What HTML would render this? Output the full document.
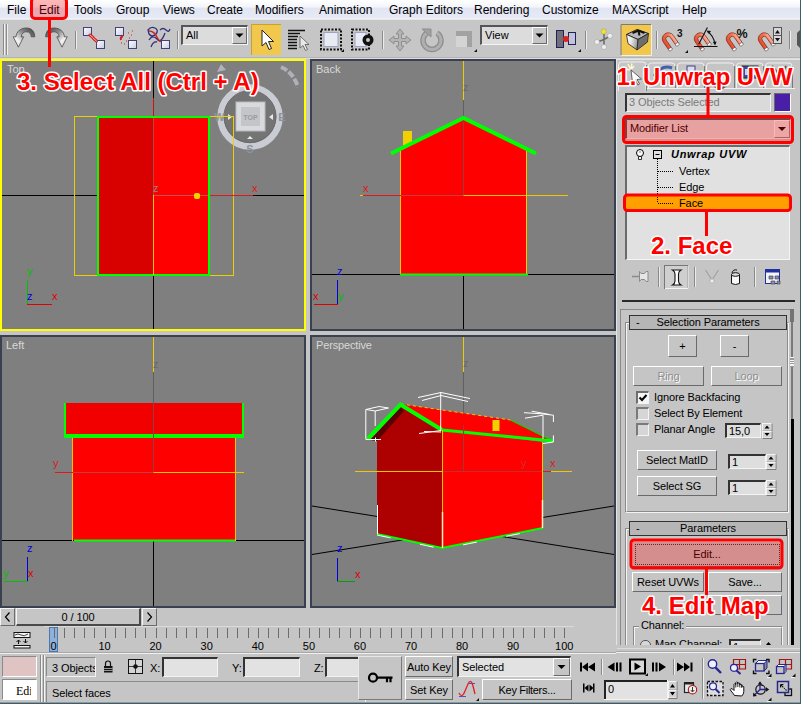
<!DOCTYPE html>
<html>
<head>
<meta charset="utf-8">
<title>3ds Max - Unwrap UVW</title>
<style>
html,body{margin:0;padding:0;}
body{width:801px;height:704px;overflow:hidden;background:#c5c5c5;font-family:"Liberation Sans",sans-serif;font-size:11px;color:#000;position:relative;}
.abs{position:absolute;}
#menubar{left:0;top:0;width:801px;height:19px;background:linear-gradient(#ffffff 0%,#f3f4fa 38%,#e1e5f3 42%,#e6e9f5 92%,#f6f7fb 100%);}
#menubar span{position:absolute;top:3px;font-size:12px;color:#000;white-space:nowrap;}
#toolbar{left:0;top:19px;width:801px;height:39px;background:#c6c6c6;border-top:1px solid #e8e8e8;box-sizing:border-box;}
.vp{position:absolute;box-sizing:border-box;border:2px solid #394150;background:#7f7f7f;overflow:hidden;}
.vp.active{border-color:#ffff00;}
.vp svg{position:absolute;left:-2px;top:-2px;}
.vplabel{font-family:"Liberation Sans",sans-serif;font-size:11px;fill:#d8d8d8;}
.ax{font-family:"Liberation Sans",sans-serif;font-size:11px;}
.btn{position:absolute;box-sizing:border-box;background:#c5c5c5;border:1px solid;border-color:#fff #6a6a6a #6a6a6a #fff;text-align:center;font-size:11px;white-space:nowrap;overflow:hidden;}
.sunk{position:absolute;box-sizing:border-box;background:#dcdcdc;border:1px solid;border-color:#555 #fff #fff #555;font-size:11px;white-space:nowrap;overflow:hidden;}
.txt{position:absolute;white-space:nowrap;font-size:11px;}
.anno{font-family:"Liberation Sans",sans-serif;font-weight:bold;fill:#ff0000;stroke:#fff;stroke-width:3px;paint-order:stroke fill;stroke-linejoin:round;}
</style>
</head>
<body>

<!-- MENU BAR -->
<div id="menubar" class="abs">
<span style="left:7px">File</span>
<span style="left:39px">Edit</span>
<span style="left:74px">Tools</span>
<span style="left:116px">Group</span>
<span style="left:163px">Views</span>
<span style="left:207px">Create</span>
<span style="left:255px">Modifiers</span>
<span style="left:319px">Animation</span>
<span style="left:389px">Graph Editors</span>
<span style="left:474px">Rendering</span>
<span style="left:542px">Customize</span>
<span style="left:612px">MAXScript</span>
<span style="left:682px">Help</span>
</div>

<!-- TOOLBAR -->
<div id="toolbar" class="abs">
<svg class="abs" style="left:0;top:-1px" width="801" height="40" viewBox="0 19 801 40">
<defs>
<linearGradient id="gArrow" x1="1" y1="0" x2="0.100" y2="0.900"><stop offset="0" stop-color="#3a3a3a"/><stop offset="0.450" stop-color="#8c8c8c"/><stop offset="0.800" stop-color="#f4f4f4"/><stop offset="1" stop-color="#d0d0d0"/></linearGradient>
<linearGradient id="gSq" x1="0" y1="0" x2="1" y2="1"><stop offset="0" stop-color="#ffffff"/><stop offset="1" stop-color="#c8cce0"/></linearGradient>
<linearGradient id="gMag" x1="0" y1="0" x2="1" y2="0"><stop offset="0" stop-color="#e8482a"/><stop offset="0.6" stop-color="#f4704e"/><stop offset="1" stop-color="#ffb8a0"/></linearGradient>
<linearGradient id="gCube" x1="0" y1="0" x2="1" y2="0.300"><stop offset="0" stop-color="#ffffff"/><stop offset="0.500" stop-color="#e8e8e8"/><stop offset="1" stop-color="#a0a0a0"/></linearGradient>
</defs>
<rect x="0" y="57" width="801" height="1" fill="#b4b4b4"/><rect x="0" y="58" width="801" height="1" fill="#dcdcdc"/>
<!-- grip -->
<path d="M3.500 24V55M6.500 24V55" stroke="#8a8a8a" stroke-width="1"/>
<path d="M4.500 24V55M7.500 24V55" stroke="#f0f0f0" stroke-width="1"/>
<!-- undo -->
<path id="undoA" d="M13.200 36.800L18.400 47.200L23.600 36.800H21.200C21.500 33.500 23.500 31.800 26.500 31.800C29.500 31.800 31 33.500 31.200 36.800H34.800C34.500 31 31.500 28 26.400 28C20.500 28 16.500 31.500 16 36.800Z" fill="url(#gArrow)" stroke="#4a4a4a" stroke-width="0.800" stroke-linejoin="round"/>
<!-- redo -->
<use href="#undoA" transform="translate(80.400 0) scale(-1 1)"/>
<path d="M75.500 31V49M177.500 31V49M382.500 31V49M585.500 31V49M656.500 31V49M789.500 31V49" stroke="#8a8a8a" stroke-width="1"/>
<path d="M76.500 31V49M178.500 31V49M383.500 31V49M586.500 31V49M657.500 31V49M790.500 31V49" stroke="#ececec" stroke-width="1"/>
<!-- link -->
<rect x="83.500" y="27.500" width="8" height="8" fill="url(#gSq)" stroke="#40407a"/>
<rect x="96.500" y="40.500" width="8" height="8" fill="url(#gSq)" stroke="#40407a"/>
<path d="M90 35l3 2.500M93.500 38.500l3 2.500" stroke="#d02020" stroke-width="3" stroke-linecap="round" fill="none"/>
<path d="M90 35l3 2.500M93.500 38.500l3 2.500" stroke="#f8c0c0" stroke-width="1" stroke-linecap="round" fill="none"/>
<!-- unlink -->
<rect x="115.500" y="27.500" width="8" height="8" fill="url(#gSq)" stroke="#40407a"/>
<rect x="128.500" y="40.500" width="8" height="8" fill="url(#gSq)" stroke="#40407a"/>
<path d="M123 36q-3 1-2 4" stroke="#d02020" stroke-width="2" fill="none"/>
<path d="M128 33h1M131 35h1M129 38h1M126 41h1M124 44h1M121 43h1M132 31h1" stroke="#d02020" stroke-width="1"/>
<!-- bind -->
<path d="M148 30q3-4 7-2q4 2 1 6q-4 4-7 0zM149 40q4-6 8-1t8-6M151 47q2-6 6-5M160 30q3-3 6 0t4-1" stroke="#303080" stroke-width="1.300" fill="none"/>
<path d="M149 31q5 0 8 6t4 4" stroke="#d02020" stroke-width="1.300" fill="none"/>
<rect x="161.500" y="40.500" width="8" height="8" fill="url(#gSq)" stroke="#40407a"/>
<!-- select highlighted -->
<rect x="251" y="24" width="30" height="31" fill="#f2c84c"/>
<path d="M251.500 55V24.500H281" stroke="#c8a030" fill="none"/>
<path d="M262 30v16l4-3.500 3 7 2.500-1-3-7h5z" fill="#ffffff" stroke="#222" stroke-width="1" stroke-linejoin="round"/>
<!-- select by name -->
<path d="M288 30.500h17M288 33.500h12M288 36.500h10M288 39.500h9M288 42.500h9M288 45.500h9M288 48.500h9" stroke="#111" stroke-width="1.300"/>
<path d="M300 36v12l3-2.500 2.500 5 2-1-2.500-5h4z" fill="#e8e8e8" stroke="#555" stroke-width="0.800" stroke-linejoin="round"/>
<!-- rect region -->
<rect x="321" y="29.500" width="20" height="20" fill="none" stroke="#111" stroke-width="2" stroke-dasharray="2 1.500"/>
<rect x="324" y="32.500" width="14" height="14" fill="#e8eaf4" stroke="#a0a4c0" stroke-width="1"/>
<path d="M341 52h3v-3z" fill="#111"/>
<!-- window crossing -->
<rect x="352" y="29.500" width="17" height="20" fill="none" stroke="#111" stroke-width="2" stroke-dasharray="2 1.500"/>
<rect x="355" y="32.500" width="11" height="14" fill="#e8eaf4" stroke="#a0a4c0" stroke-width="1"/>
<circle cx="368" cy="40" r="5.500" fill="#111"/><circle cx="368" cy="40" r="2" fill="#c8c8c8"/>
<!-- move (gray) -->
<path d="M400 29l4 5h-2.500v4.500h4.500v-2.500l5 4-5 4v-2.500h-4.500v4.500h2.500l-4 5-4-5h2.500v-4.500h-4.500v2.500l-5-4 5-4v2.500h4.500v-4.500h-2.500z" fill="#b4b4b4" stroke="#8e8e8e" stroke-width="1"/>
<!-- rotate (gray) -->
<path d="M427 33a9 9 0 1 0 10 0" fill="none" stroke="#8e8e8e" stroke-width="5.500"/>
<path d="M427 33a9 9 0 1 0 10 0" fill="none" stroke="#b0b0b0" stroke-width="3"/>
<path d="M422 29h9v8z" fill="#a0a0a0" stroke="#8e8e8e"/>
<!-- scale (gray) -->
<rect x="456" y="31" width="16" height="16" fill="#a2a2a2"/>
<rect x="456" y="36" width="11" height="11" fill="#d4d4d4"/>
<path d="M474 52h3v-3z" fill="#111"/>
<!-- pivot -->
<rect x="556.500" y="30.500" width="7" height="17" fill="#707078" stroke="#202060"/>
<rect x="568.500" y="32.500" width="7" height="12" fill="#c0c4d8" stroke="#202060"/>
<circle cx="566" cy="39" r="3" fill="#e02020"/>
<path d="M578 52h3v-3z" fill="#111"/>
<!-- manipulate -->
<path d="M604 39.500V32M604 39.500L610 36M604 39.500L597.500 42M604 39.500V47" stroke="#6a6a6a" stroke-width="1.500" fill="none"/>
<circle cx="603.700" cy="31.500" r="2.600" fill="#f0e040" stroke="#b0a020" stroke-width="0.500"/>
<circle cx="610" cy="35.800" r="2.500" fill="#f0f0f0" stroke="#999" stroke-width="0.500"/>
<circle cx="597" cy="42" r="2.500" fill="#f0f0f0" stroke="#999" stroke-width="0.500"/>
<circle cx="604" cy="47" r="2.500" fill="#f0f0f0" stroke="#999" stroke-width="0.500"/>
<!-- keyboard override (highlighted) -->
<rect x="621" y="24" width="30" height="31" fill="#f2c84c"/>
<path d="M621 55V24.500H651" stroke="#7a7a7a" fill="none"/><path d="M621.500 55.500H651.500V25" stroke="#f0f0f0" fill="none"/>
<path d="M626.500 34.500L637 29.500L648.500 33.500L638 39.500z" fill="#b8b8b8" stroke="#222" stroke-width="1"/>
<path d="M626.500 34.500L638 39.500L637 50L628 43.500z" fill="url(#gCube)" stroke="#222" stroke-width="0.800"/>
<path d="M638 39.500L648.500 33.500L647.500 42L637 50z" fill="#6e6e6e" stroke="#222" stroke-width="0.800"/>
<path d="M632.500 33l6-2.500 6 2.500M638.500 31l1 4.500" stroke="#111" stroke-width="2" fill="none"/>
<!-- magnets -->
<g id="mag"><g transform="translate(668.300 38.800) rotate(-35)"><path d="M-6 0A6 6 0 0 1 6 0V10H2.500V0A2.500 2.500 0 0 0 -2.500 0V10H-6Z" fill="url(#gMag)" stroke="#7a2a1a" stroke-width="0.700"/><path d="M-6 8.500h3.500v2.500h-3.500zM2.500 8.500h3.500v2.500h-3.500z" fill="#ffffff" stroke="#444" stroke-width="0.500"/></g></g>
<use href="#mag" x="32"/><use href="#mag" x="64"/><use href="#mag" x="96"/>
<text x="677" y="36.500" font-family="Liberation Sans,sans-serif" font-weight="bold" font-size="10" fill="#111">3</text>
<path d="M685 53h3v-3z" fill="#111"/>
<path d="M694 46.500h23.500M698.700 44.300L707.400 27.500M707.500 31.500q6 4 7.500 12.500" stroke="#111" stroke-width="1.100" fill="none"/>
<path d="M706.500 30.500l4.500 0.500-2 3zM712.800 42l2.300 3.500 1.500-4z" fill="#111"/>
<text x="736.500" y="37.500" font-family="Liberation Sans,sans-serif" font-weight="bold" font-size="12.500" fill="#111">%</text>
<rect x="773.500" y="27.500" width="8" height="8" fill="#d8d8d8" stroke="#555"/><rect x="773.500" y="35.500" width="8" height="8" fill="#d8d8d8" stroke="#555"/>
<path d="M775 33.500l2.500-3.500 2.500 3.500zM775 38l2.500 3.500 2.500-3.500z" fill="#111"/>
<path d="M797 33l3-3v18l-3-3z" fill="#555"/>
</svg>
<div class="sunk" style="left:181px;top:5px;width:67px;height:20px;border-width:2px 1px 1px 2px;border-color:#555 #f4f4f4 #f4f4f4 #555;"><span class="txt" style="left:3px;top:2px;font-size:11px;">All</span>
<div class="btn" style="right:0;top:0;width:15px;height:17px;"><svg width="13" height="15"><path d="M2.500 5.500h8l-4 4z" fill="#000"/></svg></div></div>
<div class="sunk" style="left:480px;top:5px;width:68px;height:20px;border-width:2px 1px 1px 2px;border-color:#555 #f4f4f4 #f4f4f4 #555;"><span class="txt" style="left:3px;top:2px;font-size:11px;">View</span>
<div class="btn" style="right:0;top:0;width:15px;height:17px;"><svg width="13" height="15"><path d="M2.500 5.500h8l-4 4z" fill="#000"/></svg></div></div>
</div>

<!-- VIEWPORTS -->
<div class="vp active" id="vpTop" style="left:0;top:59px;width:306px;height:272px;">
<svg width="306" height="272" viewBox="0 59 306 272">
<!-- grid axes -->
<path d="M2 195.5H97M253 195.5H304" stroke="#000" stroke-width="1"/>
<path d="M153.5 61V98M153.5 276V329" stroke="#000" stroke-width="1"/>
<path d="M153.5 98V116" stroke="#d01010" stroke-width="1"/>
<!-- viewcube -->
<circle cx="250" cy="117" r="29.5" fill="#747474" stroke="#c9ccd3" stroke-width="6.5"/>
<circle cx="250" cy="116.500" r="26" fill="none" stroke="#6a6a6a" stroke-width="1"/>
<rect x="236" y="102" width="29" height="29" fill="#d9dade" stroke="#b8b9bd" stroke-width="1"/>
<rect x="241" y="107" width="19" height="19" fill="#c4c5c9"/>
<text x="250.500" y="120" text-anchor="middle" font-family="Liberation Sans,sans-serif" font-size="7" font-weight="bold" fill="#9a9ba0">TOP</text>
<text x="219.500" y="121" text-anchor="middle" font-family="Liberation Sans,sans-serif" font-size="11" font-weight="bold" fill="#8d929c">W</text>
<text x="282" y="121" text-anchor="middle" font-family="Liberation Sans,sans-serif" font-size="11" font-weight="bold" fill="#8d929c">E</text>
<text x="250" y="153" text-anchor="middle" font-family="Liberation Sans,sans-serif" font-size="11" font-weight="bold" fill="#8d929c">S</text>
<path d="M228 114l4 3-4 3zM273 114l-4 3 4 3zM247 139l3-3 3 3z" fill="#e8e8ec"/>
<path d="M217 72l4-8 5 6z" fill="#b0b3ba"/>
<path d="M281 67q12 5 17 20" fill="none" stroke="#aeb1b8" stroke-width="4" stroke-dasharray="7 2"/>
<!-- selection brackets (thin yellow) -->
<rect x="74.5" y="116.5" width="159" height="159" fill="none" stroke="#ead000" stroke-width="1"/>
<!-- house top -->
<rect x="99" y="118" width="54.5" height="156" fill="#d90000"/>
<rect x="153.5" y="118" width="54.5" height="156" fill="#ff0000"/>
<rect x="98" y="117" width="111" height="158" fill="none" stroke="#00ff00" stroke-width="2"/>
<path d="M153.5 118V195" stroke="#b04848" stroke-width="1"/>
<path d="M153.5 195.5H208" stroke="#c85050" stroke-width="1"/>
<path d="M210 195.5H253" stroke="#e01818" stroke-width="1"/>
<path d="M153.5 195V275" stroke="#f0c800" stroke-width="1"/>
<rect x="194" y="193" width="6" height="6" rx="2" fill="#e8d800"/>
<text class="ax" x="153" y="192" fill="#9a8080" font-size="10">z</text>
<text class="ax" x="252" y="192" fill="#e01818" font-size="10">x</text>
<!-- tripod -->
<path d="M27.500 280V304" stroke="#00c000" stroke-width="1"/>
<path d="M27 304.500H52" stroke="#e00000" stroke-width="1"/>
<text class="ax" x="27" y="275" fill="#00c000">y</text>
<text class="ax" x="27" y="300" fill="#0000e0">z</text>
<text class="ax" x="52" y="300" fill="#e00000">x</text>
<text class="vplabel" x="7" y="73">Top</text>
</svg>
</div>
<div class="vp" id="vpBack" style="left:310px;top:59px;width:306px;height:272px;">
<svg width="306" height="272" viewBox="310 59 306 272">
<path d="M312 274.500H614" stroke="#000" stroke-width="1"/>
<path d="M463.500 276V329" stroke="#000" stroke-width="1"/>
<path d="M463.500 61V100" stroke="#ead000" stroke-width="1"/>
<path d="M463.500 100V118" stroke="#606060" stroke-width="1"/>
<!-- chimney -->
<rect x="403" y="131" width="9" height="16" fill="#f0d000"/>
<!-- house -->
<polygon points="401,148 463.500,118 527,148 527,274 401,274" fill="#ff0000"/>
<path d="M400.500 148V274M526.500 148V274" stroke="#f0c800" stroke-width="1"/>
<path d="M400 274.500H528" stroke="#00ff00" stroke-width="2"/>
<path d="M391 153.500L463.500 118L536 153.500" fill="none" stroke="#00ff00" stroke-width="4" stroke-linejoin="miter"/>
<path d="M463.500 120V195" stroke="#904040" stroke-width="1"/>
<path d="M363 195.500H401" stroke="#e01818" stroke-width="1"/>
<path d="M360 195.500H363" stroke="#f0c800" stroke-width="1"/>
<path d="M401 195.500H463" stroke="#c04040" stroke-width="1"/>
<path d="M463.500 195.500H568" stroke="#f0c800" stroke-width="1"/>
<text class="ax" x="363" y="192" fill="#e01818" font-size="10">x</text>
<text class="ax" x="463" y="91" fill="#6a6a6a" font-size="10">z</text>
<!-- tripod -->
<path d="M337.500 280V304" stroke="#0000e0" stroke-width="1"/>
<path d="M314 304.500H338" stroke="#e00000" stroke-width="1"/>
<text class="ax" x="337" y="275" fill="#0000e0">z</text>
<text class="ax" x="313" y="300" fill="#e00000">x</text>
<text class="ax" x="338" y="300" fill="#00c000">y</text>
<text class="vplabel" x="316" y="73">Back</text>
</svg>
</div>
<div class="vp" id="vpLeft" style="left:0;top:335px;width:306px;height:273px;">
<svg width="306" height="273" viewBox="0 335 306 273">
<path d="M2 540.500H304" stroke="#000" stroke-width="1"/>
<path d="M153.500 541V606" stroke="#000" stroke-width="1"/>
<path d="M153.500 337V372" stroke="#ead000" stroke-width="1"/>
<path d="M153.500 372V403" stroke="#606060" stroke-width="1"/>
<!-- walls -->
<rect x="73" y="438" width="162" height="102" fill="#ff0000"/>
<path d="M72.500 438V541M235.500 438V541" stroke="#f0c800" stroke-width="1"/>
<path d="M74 540.500H235" stroke="#00ff00" stroke-width="2"/>
<!-- roof -->
<rect x="66" y="403" width="176" height="32" fill="#f20000"/>
<path d="M65 403V436M243 403V436" fill="none" stroke="#00ff00" stroke-width="2"/><path d="M64 436H244" stroke="#00ff00" stroke-width="4"/>
<path d="M153.500 403V472" stroke="#904040" stroke-width="1"/>
<path d="M55 472.500H73" stroke="#e01818" stroke-width="1"/>
<path d="M73 472.500H153" stroke="#c04040" stroke-width="1"/>
<path d="M153.500 472.500H244" stroke="#f0c800" stroke-width="1"/>
<text class="ax" x="53" y="467" fill="#e01818" font-size="10">y</text>
<text class="ax" x="153" y="368" fill="#6a6a6a" font-size="10">z</text>
<!-- tripod -->
<path d="M27.500 557V581" stroke="#0000e0" stroke-width="1"/>
<path d="M4 581.500H28" stroke="#00c000" stroke-width="1"/>
<text class="ax" x="27" y="552" fill="#0000e0">z</text>
<text class="ax" x="3" y="577" fill="#00c000">y</text>
<text class="ax" x="28" y="577" fill="#e00000">x</text>
<text class="vplabel" x="6" y="349">Left</text>
</svg>
</div>
<div class="vp" id="vpPersp" style="left:310px;top:335px;width:306px;height:273px;">
<svg width="306" height="273" viewBox="310 335 306 273">
<!-- ground grid -->
<path d="M312 506L614 554.500M312 554.500L614 506" stroke="#000" stroke-width="1"/>
<path d="M463.500 337V372" stroke="#ead000" stroke-width="1"/>
<path d="M463.500 372V425" stroke="#606060" stroke-width="1"/>
<path d="M355 471.500H377" stroke="#f0c800" stroke-width="1"/>
<!-- chimney behind? -->
<!-- gable wall (dark) -->
<polygon points="377,440 400.500,405 442,430 442,548 377,534" fill="#ad0000"/>
<!-- roof underside dark -->
<polygon points="370,440 400.500,407 404,411 377,441" fill="#5a0000"/>
<!-- long wall -->
<polygon points="442,430 543,442 543,528 442,548" fill="#ff0000"/>
<!-- roof -->
<polygon points="400.500,404 510.500,420 553,441 442,430" fill="#ff0000"/>
<rect x="492.500" y="420" width="7" height="11" fill="#f0d000"/>
<!-- roof edges -->
<path d="M401 404L510.500 420" stroke="#f0c800" stroke-width="1" stroke-dasharray="3 3"/>
<path d="M510.500 420L553 441" stroke="#00e000" stroke-width="1.200"/>
<path d="M442 430L553 441" stroke="#00ff00" stroke-width="3"/>
<path d="M367.500 439L400.500 404.500L442 430" fill="none" stroke="#00ff00" stroke-width="4" stroke-linejoin="miter"/>
<!-- bottom edges -->
<path d="M377 534L442 548L543 528" fill="none" stroke="#00ff00" stroke-width="2"/>
<path d="M377 534L442 548L543 528" fill="none" stroke="#ffffff" stroke-width="1" stroke-dasharray="14 30" transform="translate(0,1)"/>
<!-- axes -->
<path d="M377 471.500H442" stroke="#f0c800" stroke-width="1"/>
<path d="M442 471.500H542" stroke="#c03030" stroke-width="1"/>
<path d="M542 471.500H551" stroke="#e01818" stroke-width="1"/>
<path d="M551 471.500H572" stroke="#f0c800" stroke-width="1"/>
<path d="M442.500 430V520" stroke="#f0c800" stroke-width="1"/>
<path d="M442.500 512V548" stroke="#fff0c0" stroke-width="1.500"/>
<path d="M542.500 442V500" stroke="#f0c800" stroke-width="1"/>
<path d="M542.500 500V528" stroke="#fff0c0" stroke-width="1.500"/>
<path d="M377.500 505V534" stroke="#ffffff" stroke-width="1"/>
<path d="M463.500 425V471" stroke="#a03838" stroke-width="1"/>
<text class="ax" x="550" y="467" fill="#e01818" font-size="10">x</text>
<text class="ax" x="521" y="467" fill="#d03030" font-size="10">y</text>
<text class="ax" x="463" y="367" fill="#6a6a6a" font-size="10">z</text>
<!-- white selection brackets -->
<g fill="none" stroke="#ffffff" stroke-width="1">
<path d="M365.800 439.500V409.500L379 406.500L388.500 408M366 409.500L375.200 411V426M375.200 411L388.500 408M366 439.500H381M375.500 437.500V441.500"/>
<path d="M418 397.500L441 392.500L470 398.500M422 400.500L441 395.500L468 401.500M440.700 392.500V431M419 433.500L441 430.500M424 431.500L441 432"/>
<path d="M524 412.700L540 413.700L553.400 415.200V422M525 418.200L543 415.200V439M531.700 411.200L549.700 414.500M553.400 435.400V442L543 443.500"/>
</g>
<!-- tripod -->
<path d="M337.500 558V581" stroke="#0000e0" stroke-width="1"/>
<path d="M337 581.500H355" stroke="#00a000" stroke-width="1"/>
<text class="ax" x="337" y="552" fill="#0000e0">z</text>
<text class="ax" x="355" y="578" fill="#e00000">x</text>
<text class="vplabel" x="316" y="349" letter-spacing="-0.15">Perspective</text>
</svg>
</div>

<!-- RIGHT PANEL -->
<div id="panel" class="abs" style="left:0;top:0;width:801px;height:704px;">
<!-- panel edge highlight -->
<div class="abs" style="left:616px;top:59px;width:1px;height:592px;background:#e4e4e4;"></div><div class="abs" style="left:616px;top:59px;width:185px;height:1px;background:#e4e4e4;"></div>
<!-- tabs -->
<svg class="abs" style="left:616px;top:59px" width="185" height="34" viewBox="616 59 185 34">
<path d="M618.500 91V65q0-3 3-3H643q3 0 3 3V91" fill="#c5c5c5" stroke="#f0f0f0"/>
<path d="M646.500 65V91" stroke="#7a7a7a"/>
<g fill="none" stroke="#f0f0f0"><path d="M648.500 88V66q0-3 3-3H672q3 0 3 3M677.500 88V66q0-3 3-3H701q3 0 3 3M706.500 88V66q0-3 3-3H731q3 0 3 3M736.500 88V66q0-3 3-3H760q3 0 3 3M765.500 88V66q0-3 3-3H789q3 0 3 3"/></g>
<g fill="none" stroke="#7a7a7a"><path d="M675.500 66V88M704.500 66V88M734.500 66V88M763.500 66V88M792.500 66V88"/></g>
<path d="M647 88.500H795" stroke="#f0f0f0"/>
<path d="M631 70l10.500 9-4.500 .5 2.500 4.500-1.500 1-2.500-5-3 2.500z" fill="#fff" stroke="#444" stroke-width="0.800"/>
<path d="M628 64l2.500 5M625 69l5 1M632 63.500l-1 5M634 66l-2.500 3" stroke="#fff8d0" stroke-width="1.400"/>
<path d="M654 76q8-12 18-8" stroke="#4060b0" stroke-width="3" fill="none"/>
<rect x="687" y="66" width="8" height="14" fill="#d8dcf0" stroke="#404080"/>
<circle cx="720" cy="80" r="8" fill="#e0e0e0" stroke="#555" stroke-width="2.500"/>
<rect x="742" y="66" width="16" height="12" fill="#3a4a9a" stroke="#222"/><rect x="745" y="69" width="10" height="6" fill="#c8d0f0"/>
<path d="M772 66l10 12M786 66l-6 12" stroke="#555" stroke-width="2"/>
</svg>
<!-- name field -->
<div class="sunk" style="left:625px;top:93px;width:146px;height:19px;border-width:2px 1px 1px 2px;border-color:#333 #f4f4f4 #f4f4f4 #333;background:#dadada;"><span class="txt" style="left:2px;top:1px;color:#7a7a7a;font-size:11px;letter-spacing:-0.1px;">3 Objects Selected</span></div>
<div class="abs" style="left:774px;top:93px;width:17px;height:19px;background:#4a1fa8;border:1px solid;border-color:#6a6a6a #fff #fff #6a6a6a;box-sizing:border-box;"></div>
<!-- modifier list -->
<div class="sunk" style="left:625px;top:118px;width:166px;height:21px;border-width:2px 1px 1px 2px;border-color:#555 #f4f4f4 #f4f4f4 #555;background:#e0e0e0;"><span class="txt" style="left:3px;top:2px;font-size:11px;letter-spacing:-0.1px;">Modifier List</span>
<div class="btn" style="right:0;top:0;width:16px;height:18px;background:#e6e6e6;border-color:#fff #8a8a8a #8a8a8a #fff;"><svg width="14" height="16"><path d="M3 6h8l-4 4z" fill="#000"/></svg></div></div>
<!-- stack -->
<div class="sunk" style="left:625px;top:145px;width:165px;height:115px;border-width:2px 1px 1px 2px;border-color:#6a6a6a #f4f4f4 #f4f4f4 #6a6a6a;background:#e1e1e1;"></div>
<div class="abs" style="left:626px;top:196px;width:164px;height:14px;background:#ffa000;"></div>
<svg class="abs" style="left:616px;top:145px" width="185" height="70" viewBox="616 145 185 70">
<circle cx="640" cy="153" r="3.500" fill="#fff" stroke="#000" stroke-width="1"/>
<path d="M638.500 156.500h3v3h-3z" fill="#fff" stroke="#000" stroke-width="0.800"/>
<path d="M639.300 152.500l.7-1 .7 1" stroke="#000" stroke-width="0.600" fill="none"/>
<rect x="653.500" y="150.500" width="8" height="8" fill="#e1e1e1" stroke="#000"/>
<path d="M655.500 154.500h4" stroke="#000"/>
<path d="M657.500 159V203M658 171.500H674M658 187.500H674M658 203.500H674" stroke="#000" stroke-width="1" stroke-dasharray="1 1" fill="none"/>
</svg>
<span class="txt" style="left:671px;top:148px;font-size:11px;letter-spacing:-0.1px;font-weight:bold;font-style:italic;letter-spacing:0.700px;">Unwrap UVW</span>
<span class="txt" style="left:679px;top:165px;font-size:11px;letter-spacing:-0.1px;">Vertex</span>
<span class="txt" style="left:679px;top:181px;font-size:11px;letter-spacing:-0.1px;">Edge</span>
<span class="txt" style="left:679px;top:197px;font-size:11px;letter-spacing:-0.1px;">Face</span>
<!-- stack tools -->
<svg class="abs" style="left:616px;top:262px" width="185" height="30" viewBox="616 262 185 30">
<path d="M658.500 267V287M694.500 267V287M754.500 267V287" stroke="#8a8a8a"/>
<path d="M659.500 267V287M695.500 267V287M755.500 267V287" stroke="#ececec"/>
<path d="M632 276.500h7" stroke="#8a8a8a" stroke-width="1.500"/><path d="M639.500 271.500v10l1.500-2h3.500l1.500 2h2v-10h-2l-1.500 2h-3.500z" fill="#e6e6e6" stroke="#8a8a8a" stroke-width="1"/>
<rect x="664.500" y="265.500" width="23" height="23" fill="#cfcfcf" stroke="#777"/>
<path d="M665 288.500H688V266" stroke="#f4f4f4" fill="none"/>
<path d="M672.500 270q2.500 1.500 2.500 4v7q0 2.500-2.500 4h8.500q-2.500-1.500-2.500-4v-7q0-2.500 2.500-4z" fill="#fff" stroke="#111" stroke-width="1.100"/>
<path d="M705.500 270l6.500 10 6.500-10" stroke="#a0a0a0" stroke-width="1.200" fill="none"/><path d="M712 278.500l2.500 2.500-2.500 2.500-2.500-2.500z" fill="#f0f0f0" stroke="#a8a8a8" stroke-width="0.800"/>
<path d="M731.500 274.500h8v9q-4 2-8 0z" fill="#f8f8f8" stroke="#111"/>
<ellipse cx="735.500" cy="274.500" rx="4" ry="1.800" fill="#e0e0e0" stroke="#111"/>
<path d="M732 273q1-4 5-3" stroke="#111" fill="none"/>
<rect x="765.500" y="269.500" width="14" height="14" fill="#f4f4f8" stroke="#2030a0"/>
<rect x="765.500" y="269.500" width="14" height="3" fill="#2030a0"/>
<path d="M769 276h4v3h-4zM775 276h4v3h-4zM771 281h4v3h-4zM777 281h3v3h-3z" fill="#8890c0" stroke="#333" stroke-width="0.600"/>
</svg>
<!-- divider -->
<div class="abs" style="left:622px;top:300px;width:173px;height:2px;background:#2a2a2a;"></div>
<!-- rollout area -->
<div class="abs" style="left:620px;top:309px;width:174px;height:337px;border-top:1px solid #8a8a8a;border-left:1px solid #8a8a8a;box-sizing:border-box;"></div>
<!-- scrollbar -->
<div class="abs" style="left:790px;top:309px;width:4px;height:13px;background:#747474;"></div>
<div class="abs" style="left:791px;top:322px;width:2px;height:98px;background:#7a7a7a;"></div>
<div class="abs" style="left:790px;top:357px;width:4px;height:10px;background:repeating-linear-gradient(#f4f4f4 0,#f4f4f4 1px,#9a9a9a 1px,#9a9a9a 2.500px);"></div>
<div class="abs" style="left:791px;top:419px;width:3px;height:226px;background:#000;"></div>
<!-- rollout 1 frame -->
<div class="abs" style="left:625px;top:322px;width:164px;height:191px;border:1px solid;border-color:#8a8a8a #f4f4f4 #f4f4f4 #8a8a8a;box-sizing:border-box;"></div>
<div class="abs" style="left:626px;top:323px;width:162px;height:189px;border:1px solid;border-color:#f4f4f4 #8a8a8a #8a8a8a #f4f4f4;box-sizing:border-box;"></div>
<div class="abs" style="left:629px;top:315px;width:158px;height:15px;background:#b6b6b6;border:1px solid #333;box-sizing:border-box;text-align:center;font-size:11px;letter-spacing:-0.1px;line-height:13px;">Selection Parameters<span class="txt" style="left:6px;top:0;font-size:11px;letter-spacing:-0.1px;">-</span></div>
<div class="btn" style="left:668px;top:335px;width:29px;height:22px;line-height:20px;">+</div>
<div class="btn" style="left:720px;top:335px;width:29px;height:22px;line-height:20px;">-</div>
<div class="btn" style="left:633px;top:366px;width:71px;height:20px;line-height:18px;font-size:11px;letter-spacing:-0.1px;color:#8e8e8e;text-shadow:1px 1px 0 #fff;">Ring</div>
<div class="btn" style="left:711px;top:366px;width:71px;height:20px;line-height:18px;font-size:11px;letter-spacing:-0.1px;color:#8e8e8e;text-shadow:1px 1px 0 #fff;">Loop</div>
<div class="sunk" style="left:636px;top:391px;width:13px;height:13px;border-width:2px 1px 1px 2px;border-color:#6e6e6e #f4f4f4 #f4f4f4 #6e6e6e;background:#f4f4f4;"><svg class="abs" style="left:0;top:0" width="10" height="10"><path d="M1.500 4.500l2.500 2.500 4.500-5" stroke="#000" stroke-width="2" fill="none"/></svg></div>
<div class="sunk" style="left:636px;top:407px;width:13px;height:13px;border-width:2px 1px 1px 2px;border-color:#7a7a7a #f4f4f4 #f4f4f4 #7a7a7a;background:#d6d6d6;"></div>
<div class="sunk" style="left:636px;top:423px;width:13px;height:13px;border-width:2px 1px 1px 2px;border-color:#7a7a7a #f4f4f4 #f4f4f4 #7a7a7a;background:#d6d6d6;"></div>
<span class="txt" style="left:654px;top:391px;font-size:11px;letter-spacing:-0.1px;">Ignore Backfacing</span>
<span class="txt" style="left:654px;top:407px;font-size:11px;letter-spacing:-0.1px;">Select By Element</span>
<span class="txt" style="left:654px;top:423px;font-size:11px;letter-spacing:-0.1px;">Planar Angle</span>
<div class="sunk" style="left:725px;top:423px;width:36px;height:15px;border-width:2px 1px 1px 2px;border-color:#333 #f4f4f4 #f4f4f4 #333;background:#dedede;"><span class="txt" style="left:2px;top:0;font-size:11px;letter-spacing:-0.1px;">15,0</span></div>
<svg class="abs" style="left:762px;top:423px" width="11" height="16"><rect x="0.500" y="0.500" width="9" height="7" fill="#d2d2d2" stroke="#f4f4f4"/><path d="M0.500 8H10V0.500" stroke="#7a7a7a" fill="none"/><rect x="0.500" y="8.500" width="9" height="6.500" fill="#d2d2d2" stroke="#f4f4f4"/><path d="M0.500 15.500H10V8.500" stroke="#7a7a7a" fill="none"/><path d="M2.500 5.500h5l-2.500-3zM2.500 10h5l-2.500 3z" fill="#000"/></svg>
<div class="btn" style="left:637px;top:450px;width:80px;height:20px;line-height:18px;font-size:11px;letter-spacing:-0.1px;">Select MatID</div>
<div class="sunk" style="left:728px;top:454px;width:38px;height:15px;border-width:2px 1px 1px 2px;border-color:#333 #f4f4f4 #f4f4f4 #333;background:#dedede;"><span class="txt" style="left:2px;top:0;font-size:11px;letter-spacing:-0.1px;">1</span></div>
<svg class="abs" style="left:766px;top:454px" width="11" height="16"><rect x="0.500" y="0.500" width="9" height="7" fill="#d2d2d2" stroke="#f4f4f4"/><path d="M0.500 8H10V0.500" stroke="#7a7a7a" fill="none"/><rect x="0.500" y="8.500" width="9" height="6.500" fill="#d2d2d2" stroke="#f4f4f4"/><path d="M0.500 15.500H10V8.500" stroke="#7a7a7a" fill="none"/><path d="M2.500 5.500h5l-2.500-3zM2.500 10h5l-2.500 3z" fill="#000"/></svg>
<div class="btn" style="left:637px;top:476px;width:80px;height:20px;line-height:18px;font-size:11px;letter-spacing:-0.1px;">Select SG</div>
<div class="sunk" style="left:728px;top:480px;width:38px;height:15px;border-width:2px 1px 1px 2px;border-color:#333 #f4f4f4 #f4f4f4 #333;background:#dedede;"><span class="txt" style="left:2px;top:0;font-size:11px;letter-spacing:-0.1px;">1</span></div>
<svg class="abs" style="left:766px;top:480px" width="11" height="16"><rect x="0.500" y="0.500" width="9" height="7" fill="#d2d2d2" stroke="#f4f4f4"/><path d="M0.500 8H10V0.500" stroke="#7a7a7a" fill="none"/><rect x="0.500" y="8.500" width="9" height="6.500" fill="#d2d2d2" stroke="#f4f4f4"/><path d="M0.500 15.500H10V8.500" stroke="#7a7a7a" fill="none"/><path d="M2.500 5.500h5l-2.500-3zM2.500 10h5l-2.500 3z" fill="#000"/></svg>
<!-- rollout 2 -->
<div class="abs" style="left:625px;top:528px;width:164px;height:120px;border:1px solid;border-color:#8a8a8a #f4f4f4 #f4f4f4 #8a8a8a;box-sizing:border-box;border-bottom:none;"></div>
<div class="abs" style="left:626px;top:529px;width:162px;height:119px;border:1px solid;border-color:#f4f4f4 #8a8a8a #8a8a8a #f4f4f4;box-sizing:border-box;border-bottom:none;"></div>
<div class="abs" style="left:629px;top:521px;width:158px;height:15px;background:#b6b6b6;border:1px solid #333;box-sizing:border-box;text-align:center;font-size:11px;letter-spacing:-0.1px;line-height:13px;">Parameters<span class="txt" style="left:6px;top:0;font-size:11px;letter-spacing:-0.1px;">-</span></div>
<div class="btn" style="left:632px;top:541px;width:150px;height:26px;line-height:24px;font-size:11px;letter-spacing:-0.1px;">Edit...</div>
<div class="abs" style="left:635px;top:544px;width:143px;height:19px;border:1px dotted #333;"></div>
<div class="btn" style="left:632px;top:572px;width:72px;height:20px;line-height:18px;font-size:11px;letter-spacing:-0.1px;">Reset UVWs</div>
<div class="btn" style="left:708px;top:572px;width:74px;height:20px;line-height:18px;font-size:11px;letter-spacing:-0.1px;">Save...</div>
<div class="btn" style="left:708px;top:595px;width:74px;height:20px;"></div>
<div class="abs" style="left:633px;top:626px;width:150px;height:30px;border:1px solid;border-color:#8a8a8a #f4f4f4 #f4f4f4 #8a8a8a;box-sizing:border-box;"></div>
<div class="abs" style="left:634px;top:627px;width:148px;height:30px;border:1px solid;border-color:#f4f4f4 #8a8a8a #8a8a8a #f4f4f4;box-sizing:border-box;"></div>
<span class="txt" style="left:639px;top:619px;font-size:11px;letter-spacing:-0.1px;background:#c5c5c5;padding:0 2px;">Channel:</span>
<div class="abs" style="left:640px;top:640px;width:9px;height:9px;border-radius:5px;background:#d8d8d8;border:1.5px solid #555;"></div>
<span class="txt" style="left:655px;top:638px;font-size:11px;letter-spacing:-0.1px;">Map Channel:</span>
<div class="sunk" style="left:729px;top:639px;width:32px;height:15px;border-width:2px 1px 1px 2px;border-color:#333 #f4f4f4 #f4f4f4 #333;background:#dedede;"><span class="txt" style="left:2px;top:0;font-size:11px;letter-spacing:-0.1px;">1</span></div>
<svg class="abs" style="left:764px;top:640px" width="10" height="14"><path d="M1.500 5.500h6l-3-3.500z" fill="#000"/></svg>
<!-- panel bottom cover -->
<div class="abs" style="left:616px;top:645px;width:185px;height:59px;background:#c5c5c5;"></div>
<div class="abs" style="left:617px;top:648px;width:184px;height:1px;background:#dcdcdc;"></div>
</div>

<!-- BOTTOM -->
<div id="bottom" class="abs" style="left:0;top:0;width:801px;height:704px;">
<!-- time slider -->
<div class="btn" style="left:0;top:608px;width:15px;height:18px;border-color:#f4f4f4 #6a6a6a #6a6a6a #f4f4f4;"><svg width="13" height="16"><path d="M8.500 3.500l-4 4.500 4 4.500" stroke="#000" stroke-width="1.200" fill="none"/></svg></div>
<div class="btn" style="left:16px;top:608px;width:125px;height:18px;border-width:1px 2px 2px 1px;border-color:#f4f4f4 #4a4a4a #4a4a4a #f4f4f4;font-size:11px;letter-spacing:-0.1px;line-height:16px;">0 / 100</div>
<div class="btn" style="left:142px;top:608px;width:15px;height:18px;border-color:#f4f4f4 #6a6a6a #6a6a6a #f4f4f4;"><svg width="13" height="16"><path d="M4.500 3.500l4 4.500-4 4.500" stroke="#000" stroke-width="1.200" fill="none"/></svg></div>
<!-- track bar -->
<svg class="abs" style="left:0;top:626px" width="616" height="28" viewBox="0 626 616 28" font-family="Liberation Sans,sans-serif" font-size="11" fill="#000">
<rect x="44" y="626" width="530" height="1" fill="#dadada"/>
<rect x="49.500" y="627.500" width="8" height="24" fill="#8fb0d8" stroke="#4a78b0"/>
<path d="M54.5 628V638M64.5 628V638M74.5 628V638M84.5 628V638M94.5 628V638M105.5 628V638M115.5 628V638M125.5 628V638M135.5 628V638M145.5 628V638M156.5 628V638M166.5 628V638M176.5 628V638M186.5 628V638M196.5 628V638M207.5 628V638M217.5 628V638M227.5 628V638M237.5 628V638M248.5 628V638M258.5 628V638M268.5 628V638M278.5 628V638M288.5 628V638M299.5 628V638M309.5 628V638M319.5 628V638M329.5 628V638M339.5 628V638M350.5 628V638M360.5 628V638M370.5 628V638M380.5 628V638M391.5 628V638M401.5 628V638M411.5 628V638M421.5 628V638M431.5 628V638M442.5 628V638M452.5 628V638M462.5 628V638M472.5 628V638M482.5 628V638M493.5 628V638M503.5 628V638M513.5 628V638M523.5 628V638M534.5 628V638M544.5 628V638M554.5 628V638M564.5 628V638" stroke="#6c6c6c" stroke-width="1"/>
<text x="53.5" y="650" text-anchor="middle">0</text><text x="104.6" y="650" text-anchor="middle">10</text><text x="155.6" y="650" text-anchor="middle">20</text><text x="206.7" y="650" text-anchor="middle">30</text><text x="257.8" y="650" text-anchor="middle">40</text><text x="308.9" y="650" text-anchor="middle">50</text><text x="359.9" y="650" text-anchor="middle">60</text><text x="411.0" y="650" text-anchor="middle">70</text><text x="462.1" y="650" text-anchor="middle">80</text><text x="513.1" y="650" text-anchor="middle">90</text><text x="564.2" y="650" text-anchor="middle">100</text>
<rect x="14" y="632.500" width="16" height="5" fill="#f4f4f4" stroke="#111"/>
<path d="M15 635q3-2 6 0t7-1" stroke="#111" fill="none" stroke-width="0.800"/>
<rect x="14" y="645.500" width="16" height="2.500" fill="#f4f4f4" stroke="#111"/>
<path d="M18.500 644v-4M16.500 642l2-2 2 2M25.500 639v4M23.500 641l2 2 2-2" stroke="#111" fill="none"/>
<rect x="0" y="652" width="616" height="1" fill="#a8a8a8"/><rect x="0" y="653" width="616" height="1" fill="#f0f0f0"/>
</svg>
<!-- status -->
<div class="abs" style="left:2px;top:656px;width:35px;height:21px;background:#e0c4c4;border:1px solid;border-color:#8a8a8a #fff #fff #8a8a8a;box-sizing:border-box;"></div>
<div class="abs" style="left:2px;top:679px;width:35px;height:21px;background:#fff;border:1px solid;border-color:#8a8a8a #fff #fff #8a8a8a;box-sizing:border-box;overflow:hidden;"><span class="txt" style="left:13px;top:4px;width:15px;overflow:hidden;font-family:'Liberation Serif',serif;font-size:12px;">Edit</span></div>
<div class="abs" style="left:40px;top:655px;width:1px;height:49px;background:#8a8a8a;"></div><div class="abs" style="left:41px;top:655px;width:1px;height:49px;background:#f4f4f4;"></div>
<div class="abs" style="left:43px;top:655px;width:1px;height:49px;background:#8a8a8a;"></div><div class="abs" style="left:44px;top:655px;width:1px;height:49px;background:#f4f4f4;"></div>
<div class="sunk" style="left:46px;top:657px;width:50px;height:20px;background:#c5c5c5;border-color:#8a8a8a #f4f4f4 #f4f4f4 #8a8a8a;"><span class="txt" style="left:5px;top:4px;font-size:11px;letter-spacing:-0.1px;">3 Objects Selected</span></div>
<svg class="abs" style="left:100px;top:656px" width="60" height="22" viewBox="100 656 60 22">
<path d="M105.500 666v-2.500a2.500 2.500 0 0 1 5 0v2.500" stroke="#111" fill="none" stroke-width="1.200"/>
<rect x="104" y="666" width="8.500" height="6.500" fill="#111"/><path d="M104 668.500h8.500M104 670.500h8.500" stroke="#d0d0d0" stroke-width="0.700"/>
<rect x="128.500" y="659.500" width="14" height="14" fill="#d4d4d4" stroke="#111"/>
<path d="M135.500 660v13M129 666.500h13" stroke="#111" stroke-width="0.800"/><circle cx="135.500" cy="666.500" r="2.300" fill="#111"/>
</svg>
<span class="txt" style="left:150px;top:662px;font-size:11px;letter-spacing:-0.1px;">X:</span>
<div class="sunk" style="left:162px;top:657px;width:56px;height:20px;border-width:2px 1px 1px 2px;border-color:#333 #f4f4f4 #f4f4f4 #333;background:#e2e2e2;"></div>
<span class="txt" style="left:232px;top:662px;font-size:11px;letter-spacing:-0.1px;">Y:</span>
<div class="sunk" style="left:243px;top:657px;width:57px;height:20px;border-width:2px 1px 1px 2px;border-color:#333 #f4f4f4 #f4f4f4 #333;background:#e2e2e2;"></div>
<span class="txt" style="left:314px;top:662px;font-size:11px;letter-spacing:-0.1px;">Z:</span>
<div class="sunk" style="left:325px;top:657px;width:57px;height:20px;border-width:2px 1px 1px 2px;border-color:#333 #f4f4f4 #f4f4f4 #333;background:#e2e2e2;"></div>
<div class="sunk" style="left:46px;top:681px;width:320px;height:23px;background:#c5c5c5;border-color:#8a8a8a #f4f4f4 #f4f4f4 #8a8a8a;"><span class="txt" style="left:5px;top:5px;font-size:11px;letter-spacing:-0.1px;">Select faces</span></div>
<!-- key button -->
<div class="btn" style="left:358px;top:656px;width:44px;height:44px;border-color:#e8e8e8 #7a7a7a #7a7a7a #e8e8e8;"><svg width="42" height="42"><circle cx="14" cy="20.700" r="4" fill="none" stroke="#000" stroke-width="2.200"/><path d="M18 20.700h15.500M28 20.700v4.500M31.500 20.700v4.500" stroke="#000" stroke-width="2.200" fill="none"/></svg></div>
<div class="btn" style="left:405px;top:656px;width:48px;height:21px;line-height:21px;font-size:11px;letter-spacing:-0.1px;">Auto Key</div>
<div class="btn" style="left:405px;top:679px;width:48px;height:21px;line-height:21px;font-size:11px;letter-spacing:-0.1px;">Set Key</div>
<div class="sunk" style="left:457px;top:656px;width:114px;height:21px;border-width:2px 1px 1px 2px;border-color:#333 #f4f4f4 #f4f4f4 #333;background:#e2e2e2;"><span class="txt" style="left:3px;top:3px;font-size:11px;letter-spacing:-0.1px;">Selected</span>
<div class="btn" style="right:0;top:0;width:17px;height:18px;"><svg width="15" height="16"><path d="M3.500 6h8l-4 4z" fill="#000"/></svg></div></div>
<svg class="abs" style="left:457px;top:680px" width="24" height="22" viewBox="457 680 24 22"><path d="M459 696.500h7M468 683.500h7" stroke="#5050d0" stroke-width="1"/><path d="M459 693q3 6 6-2l3-7q3-6 5 2l2 8" stroke="#e02020" stroke-width="1.300" fill="none"/><path d="M476 701h3v-3z" fill="#111"/></svg>
<div class="btn" style="left:482px;top:679px;width:90px;height:21px;line-height:21px;font-size:11px;letter-spacing:-0.3px;">Key Filters...</div>
<!-- transport + nav icons -->
<svg class="abs" style="left:576px;top:654px" width="225" height="50" viewBox="576 654 225 50">
<g fill="#000" stroke="none">
<path d="M580 662.500h2v9h-2zM582 667l6-4.500v9zM588 667l7-4.500v9z"/>
<path d="M607.500 667l7-4.500v9zM616 662.500h2v9h-2zM619.500 662.500h2v9h-2z"/>
<path d="M652 662.500h2v9h-2zM655.500 662.500h2v9h-2zM659 662.500l7 4.500-7 4.500z"/>
<path d="M677 662.500l7 4.500-7 4.500zM684 662.500l6 4.500-6 4.500zM690.500 662.500h2v9h-2z"/>
<path d="M583 683.500h1.500v9h-1.500zM584.500 688l4-3.500v7zM593.500 688l-4-3.500v7zM593 683.500h1.500v9h-1.500z"/>
</g>
<rect x="630" y="659.500" width="15" height="14" fill="#d8d8d8" stroke="#000" stroke-width="2"/>
<path d="M634.500 662.500l6.500 4-6.500 4z" fill="#000"/><path d="M645 676h3v-3z" fill="#111"/>
<path d="M702.500 658V699" stroke="#8a8a8a"/><path d="M703.500 658V699" stroke="#f0f0f0"/>
<!-- frame field -->
<path d="M601.500 659V675M673.500 659V675" stroke="#8a8a8a"/><path d="M602.500 659V675M674.500 659V675" stroke="#f0f0f0"/>
<rect x="604" y="680" width="63" height="19.500" fill="#e2e2e2"/><path d="M604 699.500H667.500V680" stroke="#f4f4f4" fill="none"/><path d="M605 699V681H667" stroke="#222" stroke-width="2" fill="none"/>
<text x="608" y="693" font-family="Liberation Sans,sans-serif" font-size="11">0</text>
<rect x="668.500" y="681.500" width="8" height="8" fill="#d2d2d2" stroke="#f4f4f4"/><path d="M668.500 690H677V681.500" stroke="#7a7a7a" fill="none"/>
<rect x="668.500" y="690.500" width="8" height="7.500" fill="#d2d2d2" stroke="#f4f4f4"/><path d="M668.500 698.500H677V690.500" stroke="#7a7a7a" fill="none"/>
<path d="M670 687.500h5l-2.500-3.500zM670 692h5l-2.500 3.500z" fill="#000"/>
<!-- time config -->
<rect x="684.500" y="683" width="9" height="9.500" fill="#e8e8e8" stroke="#222" stroke-width="1.200"/><rect x="684" y="682" width="10" height="2.500" fill="#222"/>
<circle cx="692.500" cy="689.700" r="4.200" fill="#f0f0f0" stroke="#b01818" stroke-width="1.100"/><path d="M692.500 687v4.500M690.700 690l1.800 2 1.800-2" stroke="#222" stroke-width="0.900" fill="none"/>
<!-- zoom -->
<circle cx="712.500" cy="664" r="4.200" fill="#eef2ff" stroke="#262690" stroke-width="1.400"/><path d="M715.500 667.500l5.500 5.500" stroke="#262690" stroke-width="2.400"/>
<!-- zoom all -->
<path d="M733.500 659.500h12v9.500h-12zM739.500 659.500v9.500M733.500 664.500h12" fill="none" stroke="#a01818" stroke-width="1.200"/>
<circle cx="734" cy="667.800" r="3.500" fill="#eef2ff" stroke="#262690" stroke-width="1.200"/><path d="M736.500 670.500l4 3.500" stroke="#262690" stroke-width="2"/>
<!-- zoom extents -->
<path d="M753.500 662.500v-3h3M766 659.500h3v3M769 670.500v3h-3M756.500 673.500h-3v-3" fill="none" stroke="#111" stroke-width="1.400"/>
<path d="M755.500 663.500l3-3h8.500v7.500l-3 3z" fill="#8a8a8a" stroke="#262690" stroke-width="1"/>
<path d="M755.500 663.500l3-3h8.500l-3 3z" fill="#ffffff" stroke="#262690" stroke-width="1"/>
<rect x="755.500" y="663.500" width="8.500" height="7.500" fill="#c5c5c5" stroke="#262690" stroke-width="1.300"/>
<path d="M768 677h3.500v-3.500z" fill="#111"/><path d="M767 677.500h3.500" stroke="#fff" stroke-width="0.800"/>
<!-- zoom extents all -->
<path d="M779.500 659.500h12v9.500h-12zM785.500 659.500v9.500M779.500 664.500h12" fill="none" stroke="#a01818" stroke-width="1.200"/>
<path d="M776.500 666.500l2-2h7.500v7l-2 2z" fill="#c5c5c5" stroke="#262690" stroke-width="1"/>
<rect x="776.500" y="666.500" width="7.500" height="7" fill="#c5c5c5" stroke="#262690" stroke-width="1.300"/>
<path d="M776.500 666.500l2-2h7.500l-2 2z" fill="#fff" stroke="#262690" stroke-width="1"/>
<path d="M792 677h3.500v-3.500z" fill="#111"/><path d="M791 677.500h3.500" stroke="#fff" stroke-width="0.800"/>
<!-- region zoom -->
<rect x="707.500" y="681.500" width="15.500" height="14" fill="#dedede" stroke="#111" stroke-width="1.300" stroke-dasharray="2.500 1.500"/>
<circle cx="713" cy="686.300" r="3.500" fill="#eef2ff" stroke="#262690" stroke-width="1.200"/><path d="M715.500 689l4 4" stroke="#262690" stroke-width="2"/>
<!-- pan -->
<path d="M734.500 695.500q-1.500-2.500-3.500-4.500q-1.500-2 0-2.500q1.500 0 3 2v-6q.5-1.800 1.800 0v-1.800q.8-1.800 2 0v1q.8-1.800 2 0v1.300q1-1.500 2 0v1.500q1.200-1.200 2 .3v4.700q0 2.500-2 4.500z" fill="#fff" stroke="#111" stroke-width="1"/>
<path d="M735.800 683v4.500M737.800 682v5M739.800 683v4.500M741.800 684.500v3.500" stroke="#111" stroke-width="0.900"/>
<!-- orbit -->
<circle cx="760.500" cy="689.500" r="4.700" fill="none" stroke="#111" stroke-width="1.200"/>
<path d="M760 689.500V683M760 689.500H767M760 689.500L755 694.500" stroke="#262690" stroke-width="1.300" fill="none"/>
<path d="M757.800 684.500l2.200-3.200 2.200 3.200zM766 687.300l3.200 2.200-3.200 2.200zM753.300 692.500l-.3 4 4-.5z" fill="#111"/>
<path d="M768 701h3.500v-3.500z" fill="#111"/><path d="M767 701.500h3.500" stroke="#fff" stroke-width="0.800"/>
<!-- maximize -->
<rect x="785" y="689" width="6.500" height="6.500" fill="#c5c5c5" stroke="#111" stroke-width="1.300"/>
<rect x="777.500" y="681.500" width="11" height="11" fill="#c5c5c5" stroke="#262690" stroke-width="1.500"/>
<path d="M780.500 684.500l6 6M780.500 684.500h3M780.500 684.500v3" stroke="#111" stroke-width="1.100" fill="none" stroke-dasharray="4 1 1 1"/>
</svg>
<div class="abs" style="left:0;top:702px;width:801px;height:1px;background:#8d9a9f;"></div><div class="abs" style="left:0;top:703px;width:801px;height:1px;background:#3f5c68;"></div>
<div class="abs" style="left:616px;top:651px;width:185px;height:1px;background:#a8a8a8;"></div><div class="abs" style="left:616px;top:652px;width:185px;height:1px;background:#efefef;"></div>
</div>

<div class="abs" style="left:800px;top:0;width:1px;height:704px;background:#3f5c68;"></div>
<!-- ANNOTATIONS -->
<svg id="anno" class="abs" style="left:0;top:0" width="801" height="704" viewBox="0 0 801 704">
<g fill="none" stroke="#ff0000" stroke-width="3">
<rect x="31.500" y="-2" width="35" height="20.500" rx="3.500" fill="#ff0000" fill-opacity="0.280"/>
<path d="M49.500 19V67"/>
<rect x="623.500" y="116.500" width="169" height="26" rx="3" fill="#ff0000" fill-opacity="0.280"/>
<path d="M708 87V116"/>
<rect x="624.500" y="195" width="166" height="15.500" rx="3"/>
<path d="M706.500 211V236"/>
<rect x="631" y="540" width="151" height="28" rx="3" fill="#ff0000" fill-opacity="0.280"/>
<path d="M706.500 569V595"/>
</g>
<text class="anno" x="17" y="90" font-size="24">3. Select All (Ctrl + A)</text>
<text class="anno" x="616.500" y="85" font-size="23.800">1. Unwrap UVW</text>
<text class="anno" x="651" y="253.500" font-size="24">2. Face</text>
<text class="anno" x="642" y="614" font-size="24">4. Edit Map</text>
</svg>

</body>
</html>
